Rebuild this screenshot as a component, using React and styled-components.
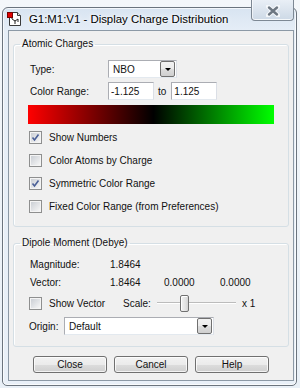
import React from "react";
import styled, { createGlobalStyle } from "styled-components";

const GlobalStyle = createGlobalStyle`
  html, body {
    margin: 0;
    padding: 0;
    background: #eef3f8;
  }
  #root {
    width: 300px;
    height: 388px;
    overflow: hidden;
  }
  * {
    box-sizing: border-box;
  }
`;

const Page = styled.div`
  width: 300px;
  height: 388px;
  padding: 7px 0 0 2px;
  background: linear-gradient(180deg, #f4f7fa 0%, #e9f0f7 100%);
  font-family: "Liberation Sans", Arial, sans-serif;
  font-size: 10px;
  color: #111;
`;

const Window = styled.div`
  width: 295px;
  height: 379px;
  border: 1px solid #6b747e;
  border-radius: 6px 6px 5px 5px;
  background: linear-gradient(180deg, #d8e4f1 0px, #e6eef7 24px, #e9f0f8 100%);
  box-shadow: inset 0 0 0 1px rgba(255, 255, 255, 0.7);
  display: flex;
  flex-direction: column;
`;

const TitleBar = styled.div`
  height: 22px;
  display: flex;
  align-items: center;
  padding-left: 4px;
  flex-shrink: 0;
`;

const Title = styled.span`
  margin-left: 6px;
  font-size: 11.4px;
  color: #000;
  text-shadow: 0 0 6px #fff, 0 0 3px #fff;
  white-space: nowrap;
`;

const CloseButton = styled.div`
  margin-left: auto;
  margin-right: 2px;
  align-self: flex-start;
  margin-top: -8px;
  width: 43px;
  height: 21px;
  border: 1px solid #7d8894;
  border-top: none;
  border-radius: 0 0 4px 4px;
  background: linear-gradient(180deg, #e9eff6 0%, #dbe4ee 50%, #cdd9e6 100%);
  box-shadow: inset 0 -1px 0 rgba(255, 255, 255, 0.8), inset 1px 0 0 rgba(255, 255, 255, 0.6);
  display: flex;
  align-items: center;
  justify-content: center;
  padding-top: 2px;
`;

const Client = styled.div`
  margin: 0 2px 4px 5px;
  flex: 1;
  border: 1px solid #8c99a6;
  background: #f0f0f0;
  padding: 7px 4px 7px 4px;
  display: flex;
  flex-direction: column;
`;

const Group = styled.fieldset`
  margin: ${(p) => (p.$first ? "0" : "10px 0 0 0")};
  padding: ${(p) => p.$pad};
  border: 1px solid #d5dfe5;
  border-radius: 3px;
  box-shadow: inset 1px 1px 0 #fff;
  min-width: 0;
`;

const Legend = styled.legend`
  margin-left: -9px;
  padding: 0 2px;
  line-height: 12px;
  font-size: 10px;
  color: #111;
`;

const Row = styled.div`
  display: flex;
  align-items: center;
  height: ${(p) => p.$h || 18}px;
  margin-top: ${(p) => p.$mt || 0}px;
`;

const Label = styled.span`
  width: ${(p) => p.$w}px;
  padding-left: ${(p) => (p.$pl === undefined ? 1 : p.$pl)}px;
  flex-shrink: 0;
  white-space: nowrap;
`;

const Combo = styled.div`
  width: ${(p) => p.$w}px;
  height: 18px;
  border: 1px solid #abadb3;
  border-right-color: #dbdfe6;
  border-bottom-color: #e3e9ef;
  background: #fff;
  display: flex;
  align-items: center;
  padding-left: ${(p) => p.$pl}px;
  padding-right: 1px;
`;

const ComboText = styled.span`
  flex: 1;
  white-space: nowrap;
`;

const DropButton = styled.div`
  width: 15px;
  height: 16px;
  border: 1px solid #707070;
  border-radius: 2px;
  background: linear-gradient(180deg, #f2f2f2 0%, #ebebeb 50%, #dddddd 51%, #cfcfcf 100%);
  display: flex;
  align-items: center;
  justify-content: center;
`;

const Arrow = styled.div`
  width: 0;
  height: 0;
  border-left: 3px solid transparent;
  border-right: 3px solid transparent;
  border-top: 3px solid #000;
  margin-top: 1px;
`;

const TextBox = styled.div`
  width: 46px;
  height: 18px;
  border: 1px solid #abadb3;
  border-right-color: #dbdfe6;
  border-bottom-color: #e3e9ef;
  background: #fff;
  display: flex;
  align-items: center;
  padding-left: 2px;
`;

const To = styled.span`
  margin: 0 5px 0 4px;
`;

const Gradient = styled.div`
  width: 246px;
  height: 19px;
  margin-top: 5px;
  margin-left: -1px;
  background: linear-gradient(90deg, #ff0000 0%, #000000 51%, #00ff00 100%);
`;

const CheckList = styled.div`
  margin-top: 2px;
  display: flex;
  flex-direction: column;
`;

const CheckRow = styled.div`
  display: flex;
  align-items: center;
  height: 23px;
  width: ${(p) => (p.$w ? `${p.$w}px` : "auto")};
  flex-shrink: 0;
`;

const Box = styled.div`
  width: 13px;
  height: 13px;
  border: 1px solid #8e8f8f;
  background: #f4f4f4;
  padding: 1px;
  flex-shrink: 0;
`;

const BoxInner = styled.div`
  width: 100%;
  height: 100%;
  background: linear-gradient(135deg, #cbcfd5 0%, #f6f6f6 100%);
  display: flex;
  align-items: center;
  justify-content: center;
`;

const CheckText = styled.span`
  margin-left: 7px;
  white-space: nowrap;
`;

const Value = styled.span`
  width: ${(p) => p.$w}px;
  flex-shrink: 0;
`;

const Slider = styled.div`
  position: relative;
  width: 79px;
  height: 18px;
  display: flex;
  align-items: center;
  flex-shrink: 0;
`;

const Track = styled.div`
  width: 100%;
  height: 2px;
  border-top: 1px solid #bcbcbc;
  border-bottom: 1px solid #ffffff;
  background: #ececec;
`;

const Thumb = styled.div`
  position: absolute;
  left: 23px;
  top: 1px;
  width: 9px;
  height: 17px;
  border: 1px solid #707070;
  border-radius: 2px;
  background: linear-gradient(90deg, #f2f2f2 0%, #e4e4e4 60%, #d4d4d4 100%);
  box-shadow: inset 1px 1px 0 #fff;
`;

const Times = styled.span`
  margin-left: 6px;
`;

const ButtonRow = styled.div`
  display: flex;
  gap: 7px;
  margin-top: 9px;
  padding-left: 20px;
`;

const Button = styled.div`
  width: 74px;
  height: 17px;
  border: 1px solid #707070;
  border-radius: 3px;
  background: linear-gradient(180deg, #f2f2f2 0%, #ebebeb 50%, #dddddd 51%, #cfcfcf 100%);
  box-shadow: inset 0 0 0 1px rgba(255, 255, 255, 0.75);
  display: flex;
  align-items: center;
  justify-content: center;
  color: #111;
`;

const AppIcon = () => (
  <svg width="16" height="16" viewBox="0 0 16 16">
    <path d="M2.5 1.5 H10.5 L13.5 4.5 V14.5 H2.5 Z" fill="#fff" stroke="#3a3a3a" />
    <path d="M10.5 1.5 V4.5 H13.5" fill="#e8e8e8" stroke="#3a3a3a" />
    <path d="M5 8 L8 10 L11 8 M8 10 V13 M5 8 V6 M11 8 V11" stroke="#222" strokeWidth="1" fill="none" />
    <rect x="0.5" y="1.5" width="5" height="5" fill="#e00000" stroke="#700" />
  </svg>
);

const CloseGlyph = () => (
  <svg width="14" height="12" viewBox="0 0 14 12">
    <path
      d="M2 1.5 L12 10.5 M12 1.5 L2 10.5"
      stroke="#f4f7fa"
      strokeWidth="4.4"
      fill="none"
      strokeLinecap="round"
    />
    <path d="M3 2.5 L11 9.5 M11 2.5 L3 9.5" stroke="#6d7782" strokeWidth="2.4" strokeLinecap="round" fill="none" />
  </svg>
);

const CheckBox = ({ checked, label, width }) => (
  <CheckRow $w={width}>
    <Box>
      <BoxInner>
        {checked && (
          <svg width="9" height="9" viewBox="0 0 9 9">
            <path d="M1.5 4.5 L3.5 7 L7.5 1.5" stroke="#4a5f97" strokeWidth="1.6" fill="none" />
          </svg>
        )}
      </BoxInner>
    </Box>
    {label && <CheckText>{label}</CheckText>}
  </CheckRow>
);

const DropDown = ({ value, width, pl }) => (
  <Combo $w={width} $pl={pl}>
    <ComboText>{value}</ComboText>
    <DropButton>
      <Arrow />
    </DropButton>
  </Combo>
);

const checks = [
  { label: "Show Numbers", checked: true },
  { label: "Color Atoms by Charge", checked: false },
  { label: "Symmetric Color Range", checked: true },
  { label: "Fixed Color Range (from Preferences)", checked: false },
];

export default function App() {
  return (
    <>
      <GlobalStyle />
      <Page>
        <Window>
          <TitleBar>
            <AppIcon />
            <Title>G1:M1:V1 - Display Charge Distribution</Title>
            <CloseButton>
              <CloseGlyph />
            </CloseButton>
          </TitleBar>
          <Client>
            <Group $first $pad="10px 4px 8px 15px">
              <Legend>Atomic Charges</Legend>
              <Row>
                <Label $w={79}>Type:</Label>
                <DropDown value="NBO" width={69} pl={4} />
              </Row>
              <Row $mt={4}>
                <Label $w={79}>Color Range:</Label>
                <TextBox>-1.125</TextBox>
                <To>to</To>
                <TextBox>1.125</TextBox>
              </Row>
              <Gradient />
              <CheckList>
                {checks.map((c, i) => (
                  <CheckBox key={i} checked={c.checked} label={c.label} />
                ))}
              </CheckList>
            </Group>
            <Group $pad="6px 4px 11px 15px">
              <Legend>Dipole Moment (Debye)</Legend>
              <Row>
                <Label $w={81}>Magnitude:</Label>
                <Value $w={54}>1.8464</Value>
              </Row>
              <Row>
                <Label $w={81}>Vector:</Label>
                <Value $w={54}>1.8464</Value>
                <Value $w={56}>0.0000</Value>
                <Value $w={50}>0.0000</Value>
              </Row>
              <Row $mt={3}>
                <CheckBox checked={false} label="Show Vector" width={94} />
                <Label $w={34} $pl={0}>Scale:</Label>
                <Slider>
                  <Track />
                  <Thumb />
                </Slider>
                <Times>x 1</Times>
              </Row>
              <Row $mt={5}>
                <Label $w={35} $pl={0}>Origin:</Label>
                <DropDown value="Default" width={150} pl={4} />
              </Row>
            </Group>
            <ButtonRow>
              <Button>Close</Button>
              <Button>Cancel</Button>
              <Button>Help</Button>
            </ButtonRow>
          </Client>
        </Window>
      </Page>
    </>
  );
}
